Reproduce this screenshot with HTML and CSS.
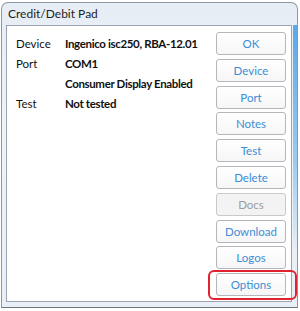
FILE: index.html
```html
<!DOCTYPE html>
<html>
<head>
<meta charset="utf-8">
<link rel="stylesheet" href="styles.css">
</head>
<body>
<div class="window">
  <div class="titlebar">Credit/Debit Pad</div>
  <div class="client">
    <div class="info">
      <div class="label">Device</div><div class="value">Ingenico isc250, RBA-12.01</div>
      <div class="label">Port</div><div class="value">COM1</div>
      <div class="label"></div><div class="value">Consumer Display Enabled</div>
      <div class="label">Test</div><div class="value">Not tested</div>
    </div>
    <div class="buttons">
      <button class="btn">OK</button>
      <button class="btn">Device</button>
      <button class="btn">Port</button>
      <button class="btn">Notes</button>
      <button class="btn">Test</button>
      <button class="btn">Delete</button>
      <button class="btn disabled">Docs</button>
      <button class="btn">Download</button>
      <button class="btn">Logos</button>
      <button class="btn highlighted">Options</button>
    </div>
  </div>
</div>
</body>
</html>
```
FILE: styles.css
```css
html, body {
  margin: 0;
  padding: 0;
  background: #ffffff;
}
body {
  width: 300px;
  height: 311px;
  overflow: hidden;
  font-family: "Lato", "Open Sans", sans-serif;
}
.window {
  position: relative;
  margin: 2px 0 0 1px;
  width: 297px;
  height: 306px;
  box-sizing: border-box;
  border: 1px solid #8b97a5;
  border-bottom-color: #6f7680;
  border-radius: 7px 7px 0 0;
  background: linear-gradient(to bottom, #e6edf5 0%, #eef3f8 40%, #e9eff6 100%);
  display: flex;
  flex-direction: column;
}
.window::after {
  content: "";
  position: absolute;
  right: 0;
  top: 22px;
  width: 4px;
  height: 230px;
  background: linear-gradient(to bottom, #5aa8e8, #9ccbf0 60%, rgba(200,225,245,0));
}
.titlebar {
  height: 22px;
  line-height: 22px;
  padding-left: 6px;
  font-size: 12px;
  color: #1e1e1e;
}
.client {
  flex: 1;
  margin: 0 5px 5px 4px;
  border: 1px solid #9ba4ae;
  background: #ffffff;
  display: flex;
  justify-content: space-between;
}
.info {
  padding: 8px 0 0 9px;
  display: grid;
  grid-template-columns: 49px auto;
  grid-auto-rows: 20px;
  align-content: start;
  font-size: 11.5px;
  line-height: 20px;
  color: #111;
  white-space: nowrap;
}
.value {
  font-weight: bold;
  letter-spacing: -0.35px;
}
.buttons {
  padding: 6px 5px 0 0;
  display: flex;
  flex-direction: column;
  gap: 3.8px;
}
.btn {
  position: relative;
  width: 70px;
  height: 23px;
  box-sizing: border-box;
  border: 1px solid #b3b7bb;
  border-radius: 3px;
  background: linear-gradient(to bottom, #ffffff, #f6f6f6);
  color: #3b8ed6;
  font-family: "Lato", "Open Sans", sans-serif;
  font-size: 11.5px;
  padding: 0;
}
.btn.disabled {
  background: #f3f3f3;
  border-color: #c9c9c9;
  color: #9c9c9c;
}
.btn.highlighted::after {
  content: "";
  position: absolute;
  left: -9px;
  right: -12px;
  top: -4px;
  bottom: -5px;
  border: 2px solid #e0232e;
  border-radius: 6px;
}
```
